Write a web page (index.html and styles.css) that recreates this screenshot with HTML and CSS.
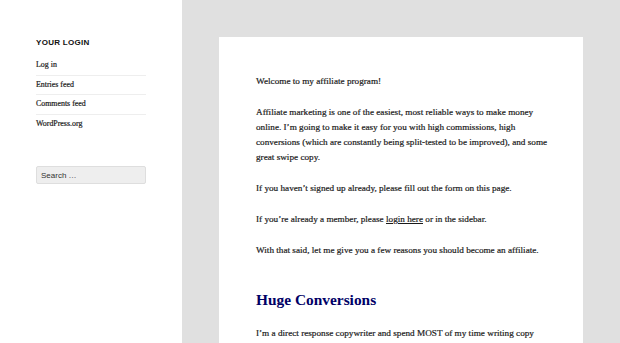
FILE: index.html
```html
<!DOCTYPE html>
<html lang="en">
<head>
<meta charset="utf-8">
<title>Affiliate Program</title>
<link rel="stylesheet" href="styles.css">
</head>
<body>
<aside class="sidebar">
  <section class="widget">
    <h2 class="widget-title">Your Login</h2>
    <ul class="widget-list">
      <li><a href="#">Log in</a></li>
      <li><a href="#">Entries feed</a></li>
      <li><a href="#">Comments feed</a></li>
      <li><a href="#">WordPress.org</a></li>
    </ul>
  </section>
  <form class="search-form">
    <input class="search-field" type="search" placeholder="Search …">
  </form>
</aside>
<main class="site-main">
  <article class="entry">
    <p>Welcome to my affiliate program!</p>
    <p>Affiliate marketing is one of the easiest, most reliable ways to make money online. I’m going to make it easy for you with high commissions, high conversions (which are constantly being split-tested to be improved), and some great swipe copy.</p>
    <p>If you haven’t signed up already, please fill out the form on this page.</p>
    <p>If you’re already a member, please <a href="#">login here</a> or in the sidebar.</p>
    <p>With that said, let me give you a few reasons you should become an affiliate.</p>
    <h2 class="entry-heading">Huge Conversions</h2>
    <p>I’m a direct response copywriter and spend MOST of my time writing copy</p>
  </article>
</main>
</body>
</html>
```
FILE: styles.css
```css
html, body {
  margin: 0;
  padding: 0;
  height: 100%;
  overflow: hidden;
}
body {
  display: flex;
  background: #e0e0e0;
  font-family: "Liberation Serif", "Times New Roman", serif;
  color: #1a1a1a;
}
.sidebar {
  width: 182px;
  flex: 0 0 182px;
  background: #fff;
  box-sizing: border-box;
  padding: 37px 36px 0;
}
.widget-title {
  margin: 0 0 7px;
  font-family: "Liberation Sans", Arial, sans-serif;
  font-weight: bold;
  font-size: 8px;
  line-height: 12px;
  letter-spacing: 0.3px;
  text-transform: uppercase;
  color: #111;
}
.widget-list {
  list-style: none;
  margin: 0;
  padding: 0;
  font-size: 7.9px;
  line-height: 12px;
}
.widget-list li {
  padding: 3px 0 3.5px;
}
.widget-list li + li {
  border-top: 1px solid #eeeeee;
}
.widget-list a {
  color: #1a1a1a;
  text-decoration: none;
  -webkit-text-stroke: 0.2px #1a1a1a;
}
.search-form {
  margin: 33px 0 0;
}
.search-field {
  display: block;
  width: 110px;
  height: 18px;
  box-sizing: border-box;
  margin: 0;
  padding: 0 4px;
  border: 1px solid #dedede;
  border-radius: 2px;
  background: #eeeeee;
  font-family: "Liberation Sans", Arial, sans-serif;
  font-size: 8px;
  color: #333;
  outline: none;
  -webkit-appearance: none;
  appearance: none;
}
.search-field::placeholder {
  color: #333;
  opacity: 1;
}
.site-main {
  flex: 1;
  padding: 37px 37px 0;
}
.entry {
  background: #fff;
  padding: 37px 34px 40px 37px;
  min-height: 400px;
  font-size: 9.2px;
  line-height: 15px;
  -webkit-text-stroke: 0.2px #1a1a1a;
}
.entry p {
  margin: 0 0 16px;
}
.entry a {
  color: #1a1a1a;
  text-decoration: underline;
}
.entry-heading {
  margin: 32px 0 16px;
  font-size: 15.4px;
  line-height: 20px;
  font-weight: bold;
  color: #000066;
  -webkit-text-stroke: 0;
}
```
